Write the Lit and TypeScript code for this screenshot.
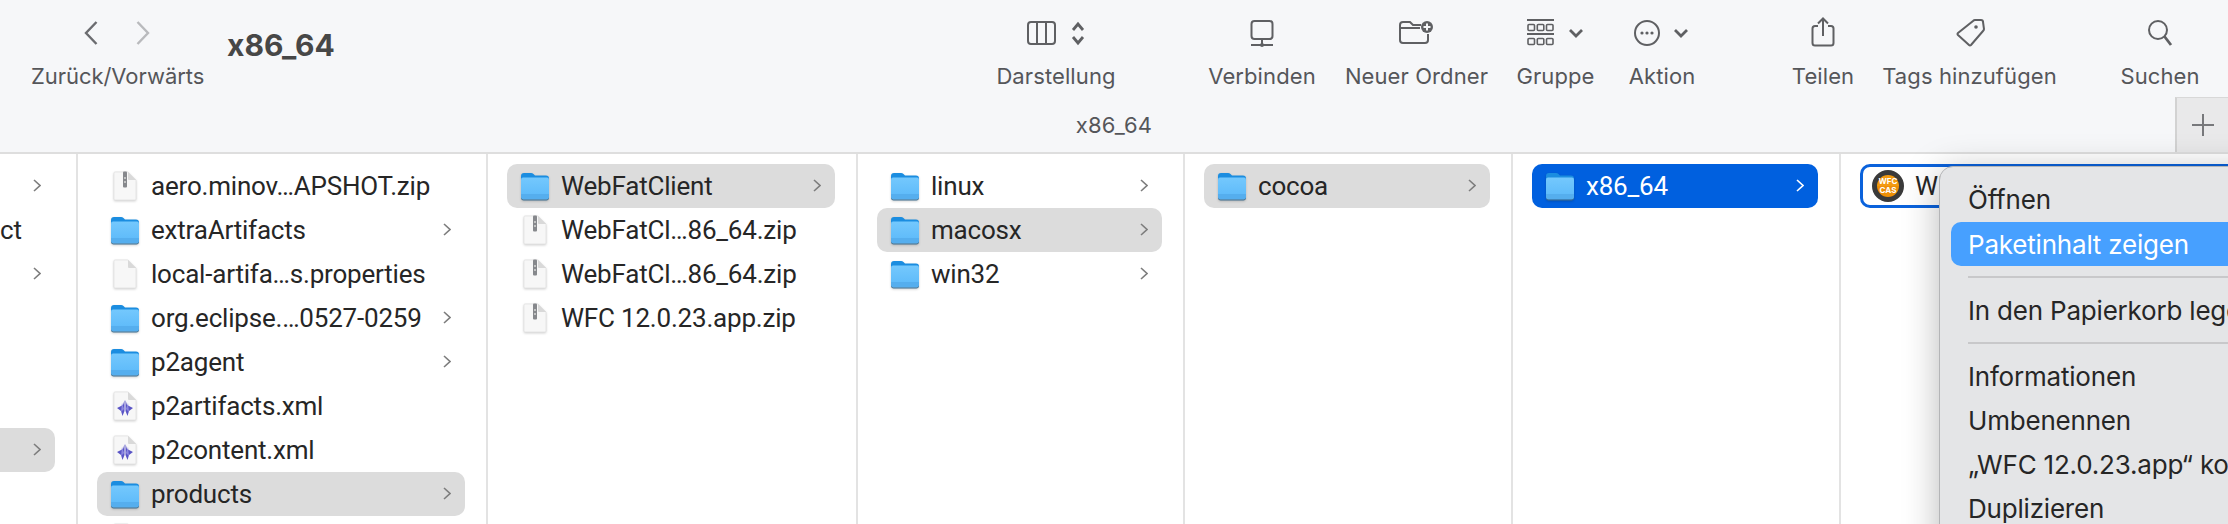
import { LitElement, html, css, svg } from 'lit';
import { customElement } from 'lit/decorators.js';
import { classMap } from 'lit/directives/class-map.js';

type IconKind = 'folder' | 'zip' | 'doc' | 'xml' | 'app' | 'none';

interface Row {
  name?: string;
  icon?: IconKind;
  arrow?: boolean;
  state?: 'open' | 'selected' | 'focus';
}

const folder = (name: string, state?: Row['state']): Row => ({ name, icon: 'folder', arrow: true, state });
const file = (name: string, icon: IconKind): Row => ({ name, icon });

const COLUMNS: Row[][] = [
  [
    { icon: 'none', arrow: true },
    { name: 'ct', icon: 'none' },
    { icon: 'none', arrow: true },
    { icon: 'none' },
    { icon: 'none' },
    { icon: 'none' },
    { icon: 'none', arrow: true, state: 'open' },
  ],
  [
    file('aero.minov…APSHOT.zip', 'zip'),
    folder('extraArtifacts'),
    file('local-artifa…s.properties', 'doc'),
    folder('org.eclipse.…0527-0259'),
    folder('p2agent'),
    file('p2artifacts.xml', 'xml'),
    file('p2content.xml', 'xml'),
    folder('products', 'open'),
    { icon: 'doc' },
  ],
  [
    folder('WebFatClient', 'open'),
    file('WebFatCl…86_64.zip', 'zip'),
    file('WebFatCl…86_64.zip', 'zip'),
    file('WFC 12.0.23.app.zip', 'zip'),
  ],
  [folder('linux'), folder('macosx', 'open'), folder('win32')],
  [folder('cocoa', 'open')],
  [folder('x86_64', 'selected')],
  [{ name: 'WFC 12.0.23.app', icon: 'app', state: 'focus' }],
];

const folderIcon = svg`
  <defs>
    <linearGradient id="fg" x1="0" y1="0" x2="0" y2="1">
      <stop offset="0" stop-color="#74c8fd" />
      <stop offset="1" stop-color="#5ab8f9" />
    </linearGradient>
  </defs>
  <path d="M0 4q0-3 3-3h7q1.500 0 2.500 1l1.500 1.500h11q3 0 3 3v6H0z" fill="#1b8de0" />
  <path d="M0 7.500q0-2 2-2h24q2 0 2 2V25q0 2.500-2.500 2.500h-23Q0 27.500 0 25z" fill="url(#fg)" />
  <path d="M0 22h28v3q0 2.500-2.500 2.500h-23Q0 27.500 0 25z" fill="#55aeee" />
  <path d="M0 25.500q.5 2 2.500 2h23q2 0 2.500-2v1q-.5 2-2.500 2h-23q-2 0-2.500-2z" fill="#3f6f90" />
`;

const pagePath = 'M2 1h13l8 8v19q0 1-1 1H2q-1 0-1-1V2q0-1 1-1z';

const pageIcon = (extra: unknown = '') => svg`
  <path d="${pagePath}" fill="#f7f7f7" stroke="#dedede" stroke-width=".7" />
  <path d="M15 1v7q0 1 1 1h7z" fill="#d9d9d9" />
  ${extra}
`;

const zipper = svg`
  <rect x="10" y="0.500" width="4" height="16" rx="1" fill="#86888c" />
  <rect x="11.200" y="6" width="1.600" height="2" fill="#d0d0d0" />
  <rect x="11.200" y="10" width="1.600" height="2" fill="#d0d0d0" />
`;

const xmlGlyph = svg`
  <path d="M11.500 9l-1.500 5-6 3 4 3 1.500 5 2-5zM12.500 9l1.500 5 6 3-4 3-1.500 5-2-5z" fill="#5a55c6" />
  <path d="M9 12l2 6-3 3zM15 12l-2 6 3 3z" fill="#8d88e0" />
`;

const fileIcon = (kind: IconKind) => {
  if (kind === 'none') return html`<span class="icon"></span>`;
  if (kind === 'app') {
    return html`<span class="app-icon"><span>WFC</span><span>CAS</span></span>`;
  }
  if (kind === 'folder') {
    return html`<svg class="icon" viewBox="0 0 28 29">${folderIcon}</svg>`;
  }
  const body = kind === 'zip' ? pageIcon(zipper) : kind === 'xml' ? pageIcon(xmlGlyph) : pageIcon();
  return html`<svg class="icon page" viewBox="-2 0 28 30">${body}</svg>`;
};

const arrow = svg`<path d="M1 1l6 5.500-6 5.500" fill="none" stroke="currentColor" stroke-width="1.600" />`;

// toolbar glyphs, all on a 30px high box that starts at y=17
const TOOL_ICONS: Record<string, { w: number; body: unknown }> = {
  view: {
    w: 58,
    body: svg`
      <rect x="1" y="5" width="27" height="22" rx="3" />
      <path d="M10 5v22M19 5v22" />
      <path class="bold" d="M46 13l5-6 5 6M46 20l5 6 5-6" />`,
  },
  connect: {
    w: 24,
    body: svg`
      <rect x="1.500" y="4" width="21" height="18" rx="3" />
      <path d="M12 22v7M1 28h22" />
      <circle class="solid" cx="12" cy="28" r="2" />`,
  },
  newFolder: {
    w: 35,
    body: svg`
      <path d="M22 8H14l-3-3H4Q1 5 1 8v15q0 3 3 3h22q3 0 3-3v-6M1 11h20" />
      <circle class="solid" cx="28" cy="10" r="6" />
      <path class="cut" d="M28 6.500v7M24.500 10h7" />`,
  },
  group: {
    w: 58,
    body: svg`
      <path d="M0 3h27M0 17h27" />
      <rect class="thin" x="1" y="7.500" width="6.500" height="6" rx="1" />
      <rect class="thin" x="10.300" y="7.500" width="6.500" height="6" rx="1" />
      <rect class="thin" x="19.500" y="7.500" width="6.500" height="6" rx="1" />
      <rect class="thin" x="1" y="21.500" width="6.500" height="6" rx="1" />
      <rect class="thin" x="10.300" y="21.500" width="6.500" height="6" rx="1" />
      <rect class="thin" x="19.500" y="21.500" width="6.500" height="6" rx="1" />
      <path class="bold" d="M43 13l6 6 6-6" />`,
  },
  action: {
    w: 56,
    body: svg`
      <circle cx="13" cy="16" r="12" />
      <circle class="solid" cx="8" cy="16" r="1.600" />
      <circle class="solid" cx="13" cy="16" r="1.600" />
      <circle class="solid" cx="18" cy="16" r="1.600" />
      <path class="bold" d="M41 13l6 6 6-6" />`,
  },
  share: {
    w: 24,
    body: svg`
      <path d="M7 9H4Q1.500 9 1.500 11.500v14.500q0 2.500 2.500 2.500h16q2.500 0 2.500-2.500V11.500Q22.500 9 20 9h-3" />
      <path d="M12 19V1.500M7 6.500l5-5 5 5" />`,
  },
  tag: {
    w: 30,
    body: svg`
      <path d="M18 4q1-1 2-1h6q2 0 2 2l1 7q0 1-1 2L16 28q-1 1-2 0L3 18q-1-1 0-2z" />
      <circle class="solid" cx="21" cy="10" r="1.800" />`,
  },
  search: {
    w: 26,
    body: svg`
      <circle cx="11" cy="13" r="9" />
      <path class="bold" d="M17.500 19.500L24 28" />`,
  },
};

const TOOLS = [
  { label: 'Darstellung', icon: 'view', width: 132, gap: 0 },
  { label: 'Verbinden', icon: 'connect', width: 124, gap: 78 },
  { label: 'Neuer Ordner', icon: 'newFolder', width: 153, gap: 16 },
  { label: 'Gruppe', icon: 'group', width: 91, gap: 17 },
  { label: 'Aktion', icon: 'action', width: 84, gap: 19 },
  { label: 'Teilen', icon: 'share', width: 76, gap: 81 },
  { label: 'Tags hinzufügen', icon: 'tag', width: 183, gap: 17 },
  { label: 'Suchen', icon: 'search', width: 90, gap: 54 },
];

const MENU: (string | null)[] = [
  'Öffnen',
  'Paketinhalt zeigen',
  null,
  'In den Papierkorb legen',
  null,
  'Informationen',
  'Umbenennen',
  '„WFC 12.0.23.app“ komprimieren',
  'Duplizieren',
];

@customElement('app-root')
export class AppRoot extends LitElement {
  static styles = css`
    :host {
      display: block;
      position: relative;
      width: 2228px;
      height: 524px;
      overflow: hidden;
      background: #fff;
      font-family: Inter, 'Liberation Sans', sans-serif;
      color: #262626;
    }

    .toolbar {
      height: 154px;
      box-sizing: border-box;
      background: #f6f7f9;
      border-bottom: 2px solid #dedede;
    }

    .top {
      display: flex;
      height: 97px;
      box-sizing: border-box;
      padding: 17px 23px 0 31px;
    }

    .nav {
      width: 172px;
      margin-right: 24px;
    }

    .nav .label { letter-spacing: -0.05px; }

    .nav-arrows {
      display: flex;
      justify-content: center;
      gap: 38px;
      height: 30px;
    }

    .nav-arrows path {
      fill: none;
      stroke-width: 2.4;
    }

    .back { stroke: #6b6c70; }
    .forward { stroke: #b9babd; }

    .title {
      flex: 1;
      margin-top: 11px;
      font-size: 30px;
      line-height: 34px;
      font-weight: 700;
      color: #474747;
    }

    .tool {
      display: flex;
      flex-direction: column;
      align-items: center;
    }

    .tool-icon {
      height: 30px;
      display: block;
      overflow: visible;
      fill: none;
      stroke: #5f6063;
      stroke-width: 2;
    }

    .tool-icon .bold { stroke-width: 2.8; }
    .tool-icon .thin { stroke-width: 1.6; }
    .tool-icon .solid { fill: #5f6063; stroke: none; }
    .tool-icon .cut { stroke: #f6f7f9; }

    .label {
      margin-top: 16px;
      font-size: 22px;
      line-height: 26px;
      letter-spacing: 0.1px;
      color: #55565a;
      white-space: nowrap;
      text-align: center;
    }

    .tabs {
      display: flex;
      align-items: center;
      height: 55px;
      padding-left: 53px;
    }

    .tab-title {
      flex: 1;
      text-align: center;
      font-size: 22px;
      letter-spacing: 0.2px;
      color: #55565a;
    }

    .plus {
      width: 53px;
      height: 55px;
      box-sizing: border-box;
      display: flex;
      align-items: center;
      justify-content: center;
      background: #e9e9ea;
      border-left: 2px solid #d2d2d2;
      border-top: 1px solid #d8d8d8;
    }

    .browser {
      display: grid;
      grid-template-columns: 78px 410px 370px 327px 328px 328px 1fr;
      height: 370px;
    }

    .column {
      box-sizing: border-box;
      padding: 10px 21px 0 19px;
      border-right: 2px solid #e3e3e3;
      overflow: hidden;
    }

    .column:first-child { padding-left: 0; }
    .column:last-child { border-right: 0; padding-right: 0; }

    .row {
      display: flex;
      align-items: center;
      height: 44px;
      box-sizing: border-box;
      padding: 0 14px;
      border-radius: 10px;
      font-family: Roboto, Inter, sans-serif;
      font-size: 26px;
      letter-spacing: -0.2px;
      white-space: nowrap;
    }

    .column:first-child .row {
      padding-left: 0;
      border-radius: 0 10px 10px 0;
    }

    .column:first-child .icon { display: none; }

    .row.open { background: #dcdcdc; }
    .row.selected { background: #0060df; color: #fff; }

    .row.focus {
      width: 420px;
      border: 3px solid #0a62dc;
      padding-left: 9px;
    }

    .icon {
      flex: none;
      width: 28px;
      height: 29px;
      margin-right: 12px;
      filter: drop-shadow(0 1px 1px rgb(0 0 0 / 0.18));
    }

    .icon.page {
      height: 30px;
      margin-bottom: 1px;
    }

    .app-icon {
      flex: none;
      display: flex;
      flex-direction: column;
      align-items: center;
      justify-content: center;
      width: 22px;
      height: 22px;
      margin-right: 11px;
      border: 5px solid #3a3a3a;
      border-radius: 50%;
      background: linear-gradient(#f39a10 50%, #ee8f06 50%);
      color: #fff;
      font-family: Inter, sans-serif;
      font-size: 8px;
      line-height: 9px;
      font-weight: 700;
      letter-spacing: 0;
    }

    .name {
      flex: 1;
      min-width: 0;
    }

    .arrow {
      flex: none;
      width: 8px;
      height: 13px;
      margin-bottom: 2px;
      color: #7d7d7d;
    }

    .selected .arrow { color: #fff; }

    .menu {
      position: absolute;
      left: 1939px;
      top: 166px;
      width: 420px;
      height: 400px;
      box-sizing: border-box;
      padding: 10px 11px 0;
      background: #e4e5e7;
      border: 1px solid #b4b5b7;
      border-radius: 14px;
      box-shadow: 0 6px 36px rgb(0 0 0 / 0.28);
      font-size: 26px;
      letter-spacing: -0.2px;
      color: #262626;
    }

    .item {
      display: flex;
      align-items: center;
      height: 44px;
      padding: 0 18px 0 17px;
      border-radius: 10px;
      white-space: nowrap;
    }

    .item:first-child { margin-bottom: 1px; }

    .item.active {
      background: #47a0ff;
      color: #fff;
    }

    .sep {
      height: 2px;
      margin: 10px 0 10px 17px;
      background: #c8c8ca;
    }
  `;

  private renderRow(row: Row) {
    return html`
      <div class=${classMap({ row: true, [row.state ?? '']: !!row.state })}>
        ${fileIcon(row.icon ?? 'none')}
        <span class="name">${row.name ?? ''}</span>
        ${row.arrow ? html`<svg class="arrow" viewBox="0 0 8 13">${arrow}</svg>` : ''}
      </div>
    `;
  }

  render() {
    return html`
      <div class="toolbar">
        <div class="top">
          <div class="nav">
            <div class="nav-arrows">
              <svg width="14" height="30" viewBox="0 0 14 30"><path class="back" d="M12.500 5L2 16l10.500 11" /></svg>
              <svg width="14" height="30" viewBox="0 0 14 30"><path class="forward" d="M1.500 5L12 16 1.500 27" /></svg>
            </div>
            <div class="label">Zurück/Vorwärts</div>
          </div>
          <div class="title">x86_64</div>
          ${TOOLS.map(tool => {
            const icon = TOOL_ICONS[tool.icon];
            return html`
              <div class="tool" style="width:${tool.width}px;margin-left:${tool.gap}px">
                <svg class="tool-icon" width=${icon.w} viewBox="0 0 ${icon.w} 30">${icon.body}</svg>
                <div class="label">${tool.label}</div>
              </div>
            `;
          })}
        </div>
        <div class="tabs">
          <div class="tab-title">x86_64</div>
          <div class="plus">
            <svg width="22" height="22" viewBox="0 0 22 22"><path d="M11 0v22M0 11h22" stroke="#77787b" stroke-width="2" /></svg>
          </div>
        </div>
      </div>
      <div class="browser">
        ${COLUMNS.map(rows => html`<div class="column">${rows.map(row => this.renderRow(row))}</div>`)}
      </div>
      <div class="menu">
        ${MENU.map(item =>
          item === null
            ? html`<div class="sep"></div>`
            : html`<div class=${classMap({ item: true, active: item === 'Paketinhalt zeigen' })}>${item}</div>`
        )}
      </div>
    `;
  }
}
